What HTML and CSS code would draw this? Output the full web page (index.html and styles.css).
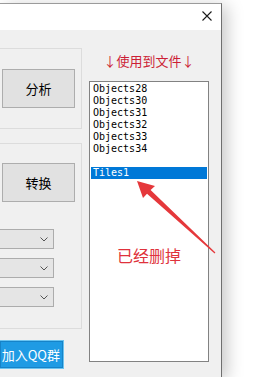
FILE: index.html
```html
<!DOCTYPE html>
<html>
<head>
<meta charset="utf-8">
<link rel="stylesheet" href="styles.css">
</head>
<body>
<div class="page">
  <div class="window">
    <div class="titlebar">
      <svg class="close" width="10" height="10" viewBox="0 0 10 10"><path d="M0.5 0.5 L9.5 9.5 M9.5 0.5 L0.5 9.5" stroke="#1a1a1a" stroke-width="1.1" fill="none"/></svg>
    </div>
    <div class="content">
      <div class="left">
        <div class="group g1">
          <div class="btn">分析</div>
        </div>
        <div class="group g2">
          <div class="btn">转换</div>
          <div class="combos">
            <div class="combo"><svg class="chev" width="8" height="5" viewBox="0 0 8 5"><path d="M0.5 0.5 L4 4 L7.5 0.5" stroke="#555" stroke-width="1" fill="none"/></svg></div>
            <div class="combo"><svg class="chev" width="8" height="5" viewBox="0 0 8 5"><path d="M0.5 0.5 L4 4 L7.5 0.5" stroke="#555" stroke-width="1" fill="none"/></svg></div>
            <div class="combo"><svg class="chev" width="8" height="5" viewBox="0 0 8 5"><path d="M0.5 0.5 L4 4 L7.5 0.5" stroke="#555" stroke-width="1" fill="none"/></svg></div>
          </div>
        </div>
        <div class="qq">加入QQ群</div>
      </div>
      <div class="right">
        <div class="label">↓使用到文件↓</div>
        <div class="listbox">
          <div class="item">Objects28</div>
          <div class="item">Objects30</div>
          <div class="item">Objects31</div>
          <div class="item">Objects32</div>
          <div class="item">Objects33</div>
          <div class="item">Objects34</div>
          <div class="item"></div>
          <div class="item sel">Tiles1</div>
          <div class="note">已经删掉</div>
        </div>
      </div>
    </div>
  </div>
</div>
<svg class="arrow" width="276" height="377" viewBox="0 0 276 377">
  <polygon points="137,181 155,186 150.6,190 215.4,252.6 214.6,253.4 147,193.8 143,198" fill="#e5383b"/>
</svg>
</body>
</html>
```
FILE: styles.css
```css
html, body {
  margin: 0;
  padding: 0;
}
body {
  width: 276px;
  height: 377px;
  overflow: hidden;
  background: #ffffff;
  position: relative;
  font-family: "Noto Sans CJK SC", "Noto Sans", sans-serif;
}
.page {
  padding-top: 3px;
  height: 377px;
  box-sizing: border-box;
}
.window {
  width: 222px;
  height: 374px;
  box-sizing: border-box;
  border-top: 1px solid #9b9b9b;
  border-right: 1px solid #6f6f6f;
  background: #f0f0f0;
  box-shadow: 5px 3px 16px rgba(0, 0, 0, 0.22);
  display: flex;
  flex-direction: column;
}
.titlebar {
  height: 26px;
  background: #ffffff;
  display: flex;
  justify-content: flex-end;
  align-items: flex-start;
  padding: 7px 9px 0 0;
  box-sizing: border-box;
}
.content {
  flex: 1;
  display: flex;
}
.left {
  width: 82px;
  padding-top: 18px;
  display: flex;
  flex-direction: column;
}
.group {
  border: 1px solid #dcdcdc;
  border-left: none;
  box-sizing: border-box;
  padding-left: 2px;
}
.g1 {
  height: 81px;
  padding-top: 20px;
}
.g2 {
  margin-top: 14px;
  height: 186px;
  padding-top: 19px;
  padding-left: 0;
}
.g2 .btn {
  margin-left: 2px;
}
.btn {
  width: 73px;
  height: 39px;
  box-sizing: border-box;
  background: #e1e1e1;
  border: 1px solid #adadad;
  display: flex;
  align-items: center;
  justify-content: center;
  font-size: 13px;
  color: #000;
}
.combos {
  margin-top: 27px;
  display: flex;
  flex-direction: column;
  gap: 9px;
}
.combo {
  width: 54px;
  height: 20px;
  box-sizing: border-box;
  background: #e5e5e5;
  border: 1px solid #acacac;
  border-left: none;
  display: flex;
  align-items: center;
  justify-content: flex-end;
  padding-right: 5px;
}
.qq {
  margin-top: 11px;
  width: 64px;
  height: 29px;
  box-sizing: border-box;
  background: #1f9be4;
  border: 1px solid #6cc4f0;
  border-left: none;
  box-shadow: inset 0 0 0 1px #1683c8;
  color: #ffffff;
  font-size: 13px;
  display: flex;
  align-items: center;
  justify-content: flex-end;
  padding-right: 3px;
  white-space: nowrap;
  overflow: hidden;
}
.right {
  flex: 1;
  padding-left: 7px;
}
.label {
  width: 120px;
  margin-top: 22px;
  height: 18px;
  line-height: 18px;
  margin-bottom: 11px;
  text-align: center;
  font-size: 13px;
  color: #cc1f36;
}
.listbox {
  position: relative;
  width: 120px;
  height: 281px;
  box-sizing: border-box;
  border: 1px solid #828282;
  background: #ffffff;
  padding: 1px;
}
.item {
  height: 12px;
  line-height: 12px;
  font-family: "DejaVu Sans Mono", "Liberation Mono", monospace;
  font-size: 10px;
  padding-left: 2px;
  color: #000;
  white-space: nowrap;
}
.sel {
  background: #0078d7;
  color: #ffffff;
}
.note {
  position: absolute;
  left: 0;
  right: 0;
  top: 163px;
  text-align: center;
  font-size: 16px;
  line-height: 20px;
  color: #e0323c;
}
.arrow {
  position: absolute;
  left: 0;
  top: 0;
  pointer-events: none;
}
```
